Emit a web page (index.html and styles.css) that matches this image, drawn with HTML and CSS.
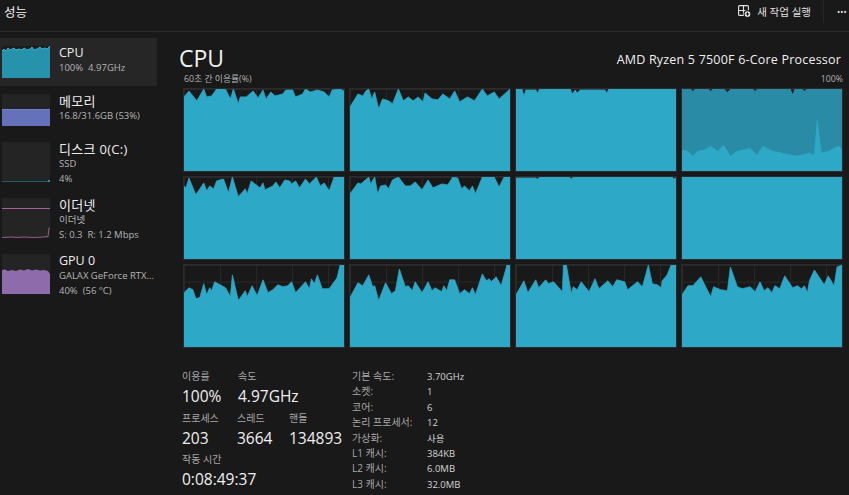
FILE: index.html
```html
<!DOCTYPE html>
<html lang="ko">
<head>
    <meta charset="UTF-8">
    <meta name="viewport" content="width=device-width, initial-scale=1.0">
    <title>성능</title>
    <link rel="stylesheet" href="styles.css">
</head>
<body>
    <header class="topbar">
        <span class="page-title">성능</span>
        <div class="actions">
            <button class="run-task">
                <svg width="13" height="14" viewBox="0 0 13 14" fill="none" stroke="#e4e4e4" stroke-width="1.1">
                    <rect x="0.6" y="1.6" width="9.8" height="9.8" rx="1"/>
                    <path d="M5.5 1.6v9.8M0.6 6.5h9.8"/>
                    <circle cx="9.5" cy="10" r="3.4" fill="#f0f0f0" stroke="#191919"/>
                    <path d="M9.5 8.2v3.6M7.7 10h3.6" stroke="#191919"/>
                </svg>
                새 작업 실행
            </button>
            <span class="more">•••</span>
        </div>
    </header>

    <div class="layout">
        <nav class="sidebar">
            <div class="item selected">
                <svg class="thumb" viewBox="0 0 48 32" preserveAspectRatio="none">
                    <polygon class="cpu-fill" points="0,5 2,3 4,5 6,2 8,4 10,3 12,2 14,4 17,3 20,4 22,2 25,4 28,3 30,1 32,4 35,3 38,1 40,3 43,2 45,3 48,0 48,32 0,32"/>
                    <polyline class="cpu-line" points="0,5 2,3 4,5 6,2 8,4 10,3 12,2 14,4 17,3 20,4 22,2 25,4 28,3 30,1 32,4 35,3 38,1 40,3 43,2 45,3 48,0"/>
                </svg>
                <div class="info">
                    <div class="name">CPU</div>
                    <div class="sub">100%&nbsp; 4.97GHz</div>
                </div>
            </div>
            <div class="item">
                <svg class="thumb" viewBox="0 0 48 32" preserveAspectRatio="none">
                    <rect class="mem-fill" x="0" y="15" width="48" height="17"/>
                    <rect class="mem-line" x="0" y="15" width="48" height="1"/>
                </svg>
                <div class="info">
                    <div class="name ko">메모리</div>
                    <div class="sub">16.8/31.6GB (53%)</div>
                </div>
            </div>
            <div class="item tall">
                <svg class="thumb" viewBox="0 0 48 40" preserveAspectRatio="none">
                    <rect class="disk-line" x="0" y="39" width="48" height="1"/>
                    <rect class="disk-tick" x="46" y="38" width="2" height="2"/>
                </svg>
                <div class="info">
                    <div class="name ko">디스크 0(C:)</div>
                    <div class="sub">SSD</div>
                    <div class="sub">4%</div>
                </div>
            </div>
            <div class="item tall">
                <svg class="thumb" viewBox="0 0 48 40" preserveAspectRatio="none">
                    <rect class="net-line" x="0" y="10" width="48" height="0.8"/>
                    <polyline class="net-low" points="0,39.5 10,39 14,39.5 22,39 32,39.5 42,39 46,38.5 47,30 48,30"/>
                </svg>
                <div class="info">
                    <div class="name ko">이더넷</div>
                    <div class="sub">이더넷</div>
                    <div class="sub">S: 0.3&nbsp; R: 1.2 Mbps</div>
                </div>
            </div>
            <div class="item tall">
                <svg class="thumb" viewBox="0 0 48 40" preserveAspectRatio="none">
                    <polygon class="gpu-fill" points="0,16 3,15.5 6,17 10,16 14,17 18,15.5 22,16.5 26,15 30,16.5 34,15.5 38,16.5 42,16 46,17 48,20 48,40 0,40"/>
                </svg>
                <div class="info">
                    <div class="name">GPU 0</div>
                    <div class="sub">GALAX GeForce RTX...</div>
                    <div class="sub">40%&nbsp; (56 °C)</div>
                </div>
            </div>
        </nav>

        <main class="main">
            <div class="title-row">
                <h1>CPU</h1>
                <span class="model">AMD Ryzen 5 7500F 6-Core Processor</span>
            </div>
            <div class="axis-row">
                <span>60초 간 이용률(%)</span>
                <span>100%</span>
            </div>

            <div class="graphs">
                <div class="graph"><svg viewBox="0 0 162 83" preserveAspectRatio="none"><polygon class="load" points="0,8 5,2 13,12 20,0 23,8 28,7 33,0 42,0 47,10 50,0 55,15 57,8 63,8 70,2 75,9 80,1 83,10 88,3 92,7 100,5 103,1 110,1 113,8 120,5 123,0 128,3 135,1 142,3 147,8 150,1 158,0 162,2 162,83 0,83"/></svg></div>
                <div class="graph"><svg viewBox="0 0 162 83" preserveAspectRatio="none"><polygon class="load" points="0,18 8,5 13,7 16,2 19,0 22,10 25,3 29,20 33,10 39,12 43,15 49,0 54,12 59,8 64,12 69,8 74,13 76,4 83,10 89,11 94,5 101,10 106,2 111,13 119,8 126,12 134,0 139,7 146,3 151,10 162,0 162,83 0,83"/></svg></div>
                <div class="graph"><svg viewBox="0 0 162 83" preserveAspectRatio="none"><polygon class="load" points="0,0 6,0 8,7 10,1 20,1 22,4 24,0 55,0 57,5 60,1 62,4 65,1 90,1 92,4 94,0 162,0 162,83 0,83"/></svg></div>
                <div class="graph"><svg viewBox="0 0 162 83" preserveAspectRatio="none"><polygon class="kernel" points="0,0 9,0 11,2 13,0 27,0 29,2 31,0 43,0 46,3 49,0 72,0 74,2 76,0 110,0 112,5 114,0 122,0 124,2 126,0 162,0 162,83 0,83"/><polygon class="load" points="0,62 6,63 11,68 16,63 22,62 29,58 36,63 42,57 49,68 56,63 69,60 76,67 82,58 92,63 102,65 116,68 129,65 134,67 137,32 141,65 149,63 154,60 159,58 162,62 162,83 0,83"/></svg></div>

                <div class="graph"><svg viewBox="0 0 162 83" preserveAspectRatio="none"><polygon class="load" points="0,9 2,11 5,1 12,18 20,6 23,14 26,9 30,12 33,4 40,2 45,16 49,0 55,20 62,12 64,17 68,4 77,11 80,6 82,13 90,9 93,5 97,11 102,3 107,4 109,7 113,4 117,11 123,2 127,7 134,0 138,9 142,6 147,14 152,0 162,0 162,83 0,83"/></svg></div>
                <div class="graph"><svg viewBox="0 0 162 83" preserveAspectRatio="none"><polygon class="load" points="0,17 8,6 11,7 19,0 21,7 25,0 28,17 31,9 36,8 39,12 43,3 49,0 56,9 61,9 66,5 73,13 79,3 84,11 93,7 99,8 104,0 109,1 113,12 116,9 121,14 124,9 127,17 134,0 146,0 151,10 156,0 162,0 162,83 0,83"/></svg></div>
                <div class="graph"><svg viewBox="0 0 162 83" preserveAspectRatio="none"><polygon class="load" points="0,1 20,1 22,2 24,0 54,0 56,2 58,0 158,0 160,2 162,1 162,83 0,83"/></svg></div>
                <div class="graph"><svg viewBox="0 0 162 83" preserveAspectRatio="none"><polygon class="load" points="0,0 162,0 162,83 0,83"/></svg></div>

                <div class="graph"><svg viewBox="0 0 162 83" preserveAspectRatio="none"><polygon class="load" points="0,28 5,23 9,25 12,34 16,33 20,19 23,30 26,23 28,26 31,17 42,23 47,32 49,10 55,36 62,26 64,32 69,21 74,31 80,15 85,28 90,25 95,20 100,22 105,21 109,17 113,28 123,17 127,24 129,14 132,19 135,10 140,24 147,24 155,13 158,0 162,0 162,83 0,83"/></svg></div>
                <div class="graph"><svg viewBox="0 0 162 83" preserveAspectRatio="none"><polygon class="load" points="0,33 8,18 13,21 19,10 23,22 25,21 29,36 36,18 42,29 46,26 50,4 56,22 59,21 63,26 66,17 73,28 79,17 83,26 86,23 93,27 95,21 98,26 101,15 106,15 111,29 116,25 121,29 124,23 127,30 134,9 138,16 141,14 143,17 148,12 153,21 159,0 162,0 162,83 0,83"/></svg></div>
                <div class="graph"><svg viewBox="0 0 162 83" preserveAspectRatio="none"><polygon class="load" points="0,30 8,16 12,28 20,15 23,23 30,15 33,19 38,17 47,27 48,0 51,0 56,29 58,22 62,25 66,17 74,27 80,14 84,24 93,16 98,22 102,15 110,17 113,25 123,17 128,22 134,0 138,19 143,20 147,23 148,16 153,10 157,0 162,0 162,83 0,83"/></svg></div>
                <div class="graph"><svg viewBox="0 0 162 83" preserveAspectRatio="none"><polygon class="load" points="0,30 6,21 11,21 19,12 24,22 29,32 32,22 39,25 46,26 49,2 56,22 61,24 69,22 74,27 79,17 83,26 87,23 91,28 94,21 99,24 104,11 112,23 117,21 121,24 124,21 127,28 129,16 134,5 144,20 148,11 154,21 157,2 162,0 162,83 0,83"/></svg></div>
            </div>

            <section class="stats">
                <div class="live">
                    <div class="stat-row">
                        <div class="stat wide"><div class="label">이용률</div><div class="value">100%</div></div>
                        <div class="stat"><div class="label">속도</div><div class="value">4.97GHz</div></div>
                    </div>
                    <div class="stat-row">
                        <div class="stat wide"><div class="label">프로세스</div><div class="value">203</div></div>
                        <div class="stat thread"><div class="label">스레드</div><div class="value">3664</div></div>
                        <div class="stat"><div class="label">핸들</div><div class="value">134893</div></div>
                    </div>
                    <div class="stat-row">
                        <div class="stat"><div class="label">작동 시간</div><div class="value">0:08:49:37</div></div>
                    </div>
                </div>
                <dl class="specs">
                    <dt>기본 속도:</dt><dd>3.70GHz</dd>
                    <dt>소켓:</dt><dd>1</dd>
                    <dt>코어:</dt><dd>6</dd>
                    <dt>논리 프로세서:</dt><dd>12</dd>
                    <dt>가상화:</dt><dd>사용</dd>
                    <dt>L1 캐시:</dt><dd>384KB</dd>
                    <dt>L2 캐시:</dt><dd>6.0MB</dd>
                    <dt>L3 캐시:</dt><dd>32.0MB</dd>
                </dl>
            </section>
        </main>
    </div>
</body>
</html>
```

FILE: styles.css
```css
* {
    box-sizing: border-box;
}
html, body {
    height: 100%;
}
body {
    margin: 0;
    overflow: hidden;
    background-color: #191919;
    color: #f2f2f2;
    font-family: "Open Sans", "Noto Sans CJK KR", sans-serif;
}

/* top bar */
.topbar {
    display: flex;
    justify-content: space-between;
    align-items: center;
    height: 32px;
    padding: 0 0 9px 4px;
    border-bottom: 1px solid #2b2b2b;
}
.page-title {
    font-size: 12.5px;
}
.actions {
    display: flex;
    align-items: center;
    height: 23px;
}
.run-task {
    display: flex;
    align-items: center;
    gap: 6px;
    height: 23px;
    padding: 0 12px 0 0;
    border: none;
    border-right: 1px solid #262626;
    background: none;
    color: #e0e0e0;
    font-family: inherit;
    font-size: 10.5px;
}
.more {
    width: 25px;
    padding-left: 13px;
    color: #e8e8e8;
    font-size: 8.5px;
    white-space: nowrap;
}

.layout {
    display: flex;
    height: 463px;
}

/* left list */
.sidebar {
    flex: none;
    width: 157px;
    padding-top: 6px;
}
.item {
    display: flex;
    gap: 9px;
    height: 48px;
    padding: 8px 2px;
}
.item.tall {
    height: 56px;
}
.item.selected {
    background-color: #262626;
}
.thumb {
    flex: none;
    width: 48px;
    background-color: #242424;
}
.selected .thumb {
    background-color: #1c1c1c;
}
.info {
    min-width: 0;
    white-space: nowrap;
}
.name {
    height: 12px;
    font-size: 12.5px;
    line-height: 14px;
    color: #ececec;
}
.name.ko {
    font-size: 13px;
    letter-spacing: 0.3px;
}
.sub {
    height: 15px;
    font-size: 9.5px;
    line-height: 15px;
    color: #b4b4b4;
}
.name + .sub {
    margin-top: 1.5px;
}
.cpu-fill {
    fill: #2692ac;
}
.cpu-line {
    fill: none;
    stroke: #2fb3d3;
    stroke-width: 1;
}
.mem-fill {
    fill: #6571b9;
}
.mem-line {
    fill: #7480cc;
}
.disk-line {
    fill: #1f5d66;
}
.disk-tick {
    fill: #2b8f9e;
}
.net-line {
    fill: #c56fb2;
}
.net-low {
    fill: none;
    stroke: #b5699f;
    stroke-width: 0.8;
}
.gpu-fill {
    fill: #8e6cab;
}

/* main panel */
.main {
    flex: 1;
    min-width: 0;
    padding: 0 6px 0 22px;
}
.title-row {
    display: flex;
    justify-content: space-between;
    align-items: flex-end;
    height: 40px;
    padding-right: 2px;
}
h1 {
    margin: 0;
    font-size: 23px;
    font-weight: 400;
    line-height: 28px;
}
.model {
    font-size: 12.5px;
    letter-spacing: 0.2px;
    line-height: 24px;
    color: #f0f0f0;
}
.axis-row {
    display: flex;
    justify-content: space-between;
    height: 16px;
    padding-left: 5px;
    font-size: 8.8px;
    line-height: 15px;
    color: #b0b0b0;
}
.graphs {
    display: grid;
    grid-template-columns: repeat(4, 1fr);
    grid-auto-rows: 84px;
    gap: 4px;
    margin-left: 4px;
    height: 260px;
}
.graph {
    border: 1px solid #2b2b2b;
    background-color: #191919;
    background-image:
        linear-gradient(to right, #282828 1px, transparent 1px),
        linear-gradient(to bottom, #282828 1px, transparent 1px);
    background-size: 36px 100%, 100% 16.6px;
}
.graph svg {
    display: block;
    width: 100%;
    height: 100%;
}
.load {
    fill: #2ea8c7;
    stroke: #2ea8c7;
    stroke-width: 0.8;
    stroke-linejoin: round;
}
.kernel {
    fill: #298ba6;
}

/* numbers under the graphs */
.stats {
    display: flex;
    margin: 21px 0 0 3px;
}
.live {
    width: 170px;
    flex: none;
}
.stat-row {
    display: flex;
    height: 41.5px;
}
.stat {
    white-space: nowrap;
}
.wide {
    width: 56px;
}
.thread {
    width: 52px;
}
.stat-row + .stat-row .wide {
    width: 55px;
}
.label {
    height: 15px;
    font-size: 10px;
    line-height: 14px;
    color: #a8a8a8;
}
.value {
    height: 25px;
    font-size: 15.5px;
    line-height: 24px;
    color: #f0f0f0;
}
.specs {
    display: grid;
    grid-template-columns: 75px auto;
    grid-auto-rows: 15.4px;
    margin: 0;
    font-size: 10px;
    line-height: 15.4px;
    white-space: nowrap;
}
.specs dt {
    color: #a8a8a8;
}
.specs dd {
    margin: 0;
    font-size: 9.5px;
    color: #d4d4d4;
}
```
